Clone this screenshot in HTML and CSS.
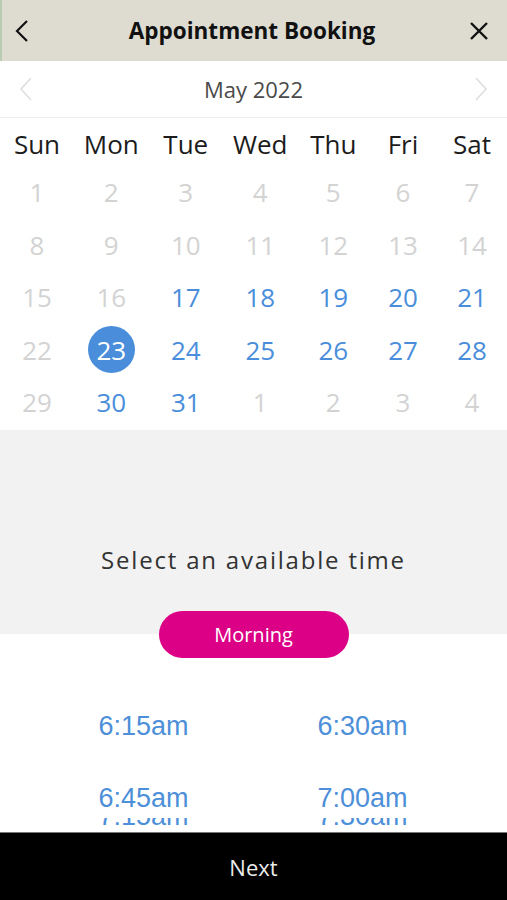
FILE: index.html
```html
<!DOCTYPE html>
<html lang="en">
<head>
    <meta charset="UTF-8">
    <meta name="viewport" content="width=device-width, initial-scale=1.0">
    <title>Appointment Booking</title>
    <link rel="stylesheet" href="styles.css">
</head>
<body>
    <div class="screen">
        <div class="top-bar">
            <span class="icon-btn">
                <svg width="14" height="22" viewBox="0 0 14 22"><path d="M12 1 L2 11 L12 21" fill="none" stroke="#111" stroke-width="2.2"/></svg>
            </span>
            <h1>Appointment Booking</h1>
            <span class="icon-btn">
                <svg width="20" height="20" viewBox="0 0 20 20"><path d="M2 2 L18 18 M18 2 L2 18" fill="none" stroke="#111" stroke-width="2.4"/></svg>
            </span>
        </div>

        <div class="month-row">
            <svg width="14" height="24" viewBox="0 0 14 24"><path d="M12 1 L2 12 L12 23" fill="none" stroke="#ddd" stroke-width="1.5"/></svg>
            <span class="month">May 2022</span>
            <svg width="14" height="24" viewBox="0 0 14 24"><path d="M2 1 L12 12 L2 23" fill="none" stroke="#ddd" stroke-width="1.5"/></svg>
        </div>

        <div class="calendar">
            <div class="weekday">Sun</div>
            <div class="weekday">Mon</div>
            <div class="weekday">Tue</div>
            <div class="weekday">Wed</div>
            <div class="weekday">Thu</div>
            <div class="weekday">Fri</div>
            <div class="weekday">Sat</div>

            <div class="day off">1</div><div class="day off">2</div><div class="day off">3</div><div class="day off">4</div><div class="day off">5</div><div class="day off">6</div><div class="day off">7</div>
            <div class="day off">8</div><div class="day off">9</div><div class="day off">10</div><div class="day off">11</div><div class="day off">12</div><div class="day off">13</div><div class="day off">14</div>
            <div class="day off">15</div><div class="day off">16</div><div class="day">17</div><div class="day">18</div><div class="day">19</div><div class="day">20</div><div class="day">21</div>
            <div class="day off">22</div><div class="day"><span class="selected">23</span></div><div class="day">24</div><div class="day">25</div><div class="day">26</div><div class="day">27</div><div class="day">28</div>
            <div class="day off">29</div><div class="day">30</div><div class="day">31</div><div class="day off">1</div><div class="day off">2</div><div class="day off">3</div><div class="day off">4</div>
        </div>

        <div class="time-intro">
            <p>Select an available time</p>
        </div>
        <div class="period">
            <button class="pill">Morning</button>
        </div>

        <div class="times">
            <div class="slot">6:15am</div>
            <div class="slot">6:30am</div>
            <div class="slot">6:45am</div>
            <div class="slot">7:00am</div>
        </div>
        <!-- next row, scrolled mostly out of view -->
        <div class="times-peek">
            <div class="slot">7:15am</div>
            <div class="slot">7:30am</div>
        </div>

        <div class="next-bar">Next</div>
    </div>
</body>
</html>
```

FILE: styles.css
```css
body {
    margin: 0;
    font-family: 'Open Sans', 'Noto Sans', sans-serif;
    background: #fff;
    overflow: hidden;
}
.screen {
    width: 507px;
    height: 900px;
    display: flex;
    flex-direction: column;
    overflow: hidden;
}
.top-bar {
    height: 61px;
    flex-shrink: 0;
    background: #dedcd1;
    border-left: 2px solid #b9cdb5;
    display: flex;
    align-items: center;
    justify-content: space-between;
    padding: 0 18px 0 13px;
}
.top-bar h1 {
    margin: 0;
    font-size: 22.5px;
    font-weight: 700;
    color: #111;
}
.icon-btn {
    display: flex;
    align-items: center;
    width: 22px;
}
.icon-btn:last-child {
    justify-content: flex-end;
}
.month-row {
    height: 56px;
    flex-shrink: 0;
    display: flex;
    align-items: center;
    justify-content: space-between;
    padding: 0 19px 0 19px;
    border-bottom: 1px solid #ececec;
}
.month {
    font-size: 22px;
    color: #4a4a4a;
}
.calendar {
    display: grid;
    grid-template-columns: 74px 74.5px 74.5px 74.5px 71.5px 68px 70px;
    grid-auto-rows: 52.5px;
    grid-template-rows: 44px;
    padding: 4px 0 1px;
    flex-shrink: 0;
}
.weekday {
    display: flex;
    align-items: center;
    justify-content: center;
    font-size: 26px;
    color: #1c1c1c;
}
.day {
    display: flex;
    align-items: center;
    justify-content: center;
    font-size: 26px;
    color: #4a8edb;
}
.day.off {
    color: #d3d3d3;
}
.selected {
    width: 47px;
    height: 47px;
    border-radius: 50%;
    background: #4a8edb;
    color: #fff;
    display: flex;
    align-items: center;
    justify-content: center;
}
.time-intro {
    background: #f2f2f2;
    height: 204px;
    flex-shrink: 0;
    display: flex;
    align-items: flex-end;
    justify-content: center;
}
.time-intro p {
    margin: 0 0 58px;
    font-size: 24px;
    letter-spacing: 1.8px;
    color: #333;
}
.period {
    display: flex;
    justify-content: center;
    margin-top: -23px;
    flex-shrink: 0;
}
.pill {
    width: 190px;
    height: 47px;
    border: none;
    border-radius: 24px;
    background: #db0085;
    color: #fff;
    font-family: 'Open Sans', 'Noto Sans', sans-serif;
    font-size: 20px;
    padding: 0;
}
.times {
    display: grid;
    grid-template-columns: 219px 219px;
    grid-auto-rows: 72px;
    padding: 33px 0 0 34px;
    flex-shrink: 0;
}
.slot {
    display: flex;
    align-items: center;
    justify-content: center;
    font-family: 'Liberation Sans', Arial, sans-serif;
    font-size: 27px;
    color: #4d8fd8;
}
.times-peek {
    display: grid;
    grid-template-columns: 219px 219px;
    grid-template-rows: 9px;
    padding-left: 34px;
    height: 9px;
    margin-top: -17px;
    overflow: hidden;
    align-items: end;
    flex-shrink: 0;
}
.times-peek .slot {
    height: 30px;
    line-height: 30px;
    margin-bottom: -4px;
}
.next-bar {
    margin-top: auto;
    height: 67px;
    flex-shrink: 0;
    background: #000;
    border-top: 1px solid #777;
    color: #ececec;
    font-size: 22px;
    display: flex;
    align-items: center;
    justify-content: center;
}
```
